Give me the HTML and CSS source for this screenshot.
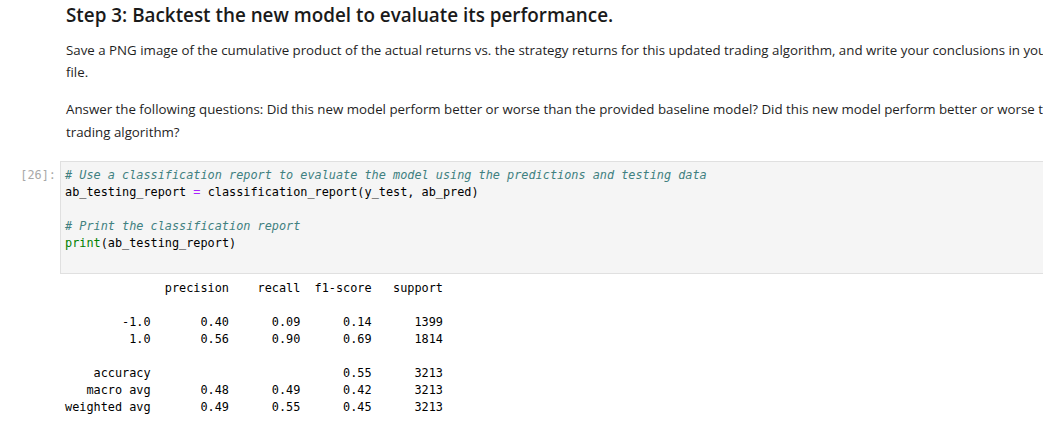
FILE: index.html
```html
<!DOCTYPE html>
<html>
<head>
<meta charset="utf-8">
<link rel="stylesheet" href="styles.css">
</head>
<body>
<div class="notebook">
  <div class="md">
    <h3 class="title">Step 3: Backtest the new model to evaluate its performance.</h3>
    <p class="para">Save a PNG image of the cumulative product of the actual returns vs. the strategy returns for this updated trading algorithm, and write your conclusions in your README<br>file.</p>
    <p class="para">Answer the following questions: Did this new model perform better or worse than the provided baseline model? Did this new model perform better or worse than the original<br>trading algorithm?</p>
  </div>
  <div class="cell">
    <div class="prompt">[26]:</div>
    <div class="editor"><pre class="code"><span class="cm"># Use a classification report to evaluate the model using the predictions and testing data</span>
ab_testing_report <span class="op">=</span> classification_report(y_test, ab_pred)

<span class="cm"># Print the classification report</span>
<span class="bi">print</span>(ab_testing_report)
 </pre></div>
  </div>
  <div class="output">
<pre class="out">              precision    recall  f1-score   support

        -1.0       0.40      0.09      0.14      1399
         1.0       0.56      0.90      0.69      1814

    accuracy                           0.55      3213
   macro avg       0.48      0.49      0.42      3213
weighted avg       0.49      0.55      0.45      3213
</pre>
  </div>
</div>
</body>
</html>
```
FILE: styles.css
```css
html, body {
  margin: 0;
  padding: 0;
  background: #fff;
  overflow: hidden;
}
.notebook {
  width: 1300px;
  color: #1f1f1f;
}
.md {
  padding-left: 66px;
  font-family: "Open Sans", "Noto Sans", sans-serif;
}
.title {
  margin: 3px 0 12px;
  font-size: 18.85px;
  font-weight: 600;
  line-height: 24px;
  color: #1a1a1a;
  white-space: nowrap;
}
.para {
  margin: 0 0 14.4px;
  font-size: 13.3px;
  line-height: 22.4px;
  white-space: nowrap;
  color: #1f1f1f;
}
.cell {
  display: flex;
  margin-top: 18px;
}
.prompt {
  width: 56px;
  padding-right: 4px;
  padding-top: 6px;
  text-align: right;
  font-family: "DejaVu Sans Mono", "Liberation Mono", monospace;
  font-size: 11.85px;
  line-height: 17px;
  color: #a8a8a8;
}
.editor {
  flex: 1;
  background: #f5f5f5;
  border: 1px solid #e0e0e0;
  padding: 5px 4px 4px;
}
.code, .out {
  margin: 0;
  font-family: "DejaVu Sans Mono", "Liberation Mono", monospace;
  font-size: 11.85px;
  line-height: 17px;
  color: #000;
}
.cm {
  color: #408080;
  font-style: italic;
}
.op {
  color: #aa22ff;
}
.bi {
  color: #008000;
}
.output {
  padding: 6px 0 0 65px;
}
```
